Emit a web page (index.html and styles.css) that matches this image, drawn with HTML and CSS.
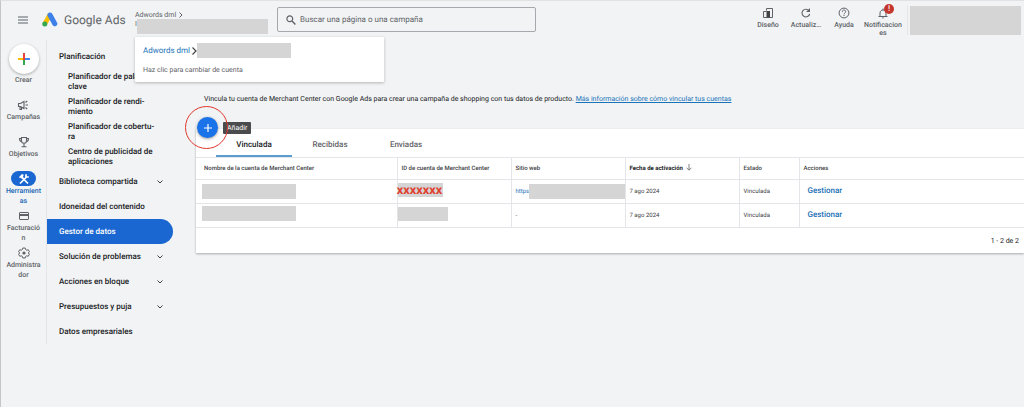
FILE: index.html
```html
<!DOCTYPE html>
<html lang="es">
<head>
    <meta charset="UTF-8">
    <title>Gestor de datos - Google Ads</title>
    <link rel="stylesheet" href="styles.css">
</head>
<body>

<header class="topbar">
    <button class="menu-button" aria-label="Menú">
        <svg width="10" height="8" viewBox="0 0 10 8"><path d="M0 1h10M0 4h10M0 7h10" stroke="#5f6368"/></svg>
    </button>
    <a class="logo" href="#">
        <svg width="16" height="15" viewBox="0 0 16 15">
            <path d="M7.500 3.500L3 11.500" stroke="#fbbc04" stroke-width="4.600" stroke-linecap="round"/>
            <path d="M8 3l4.800 8.700" stroke="#3c80e8" stroke-width="5" stroke-linecap="round"/>
            <circle cx="2.800" cy="12" r="2.500" fill="#34a853"/>
        </svg>
        <span>Google Ads</span>
    </a>
    <div class="account">
        <div class="account-path">Adwords dml
            <svg width="4" height="6" viewBox="0 0 4 6"><path d="M.5.5L3 3 .5 5.5" fill="none" stroke="#5f6368"/></svg>
        </div>
        <div class="account-name">I<span class="masked"></span></div>
        <div class="account-popup">
            <div class="popup-path">
                <a href="#">Adwords dml</a>
                <svg width="5" height="8" viewBox="0 0 5 8"><path d="M.5.5L4 4 .5 7.5" fill="none" stroke="#444" stroke-width="1.2"/></svg>
                <span class="masked"></span>
            </div>
            <div class="popup-hint">Haz clic para cambiar de cuenta</div>
        </div>
    </div>
    <label class="search">
        <svg width="10" height="10" viewBox="0 0 10 10"><circle cx="3.8" cy="3.8" r="2.9" fill="none" stroke="#5f6368" stroke-width="1.2"/><path d="M6 6l3.4 3.4" stroke="#5f6368" stroke-width="1.4"/></svg>
        <input type="text" placeholder="Buscar una página o una campaña" aria-label="Buscar una página o una campaña">
    </label>
    <div class="tools">
        <button class="tool">
            <svg width="12" height="12" viewBox="0 0 12 12"><path d="M4.500 3.500v-2h6v9h-9v-6h3" fill="none" stroke="#5f6368"/><path d="M4.500 4h3.500v6.500H4.500z" fill="#444"/></svg>
            Diseño
        </button>
        <button class="tool">
            <svg width="12" height="12" viewBox="0 0 12 12"><path d="M9 3.700A3.900 3.900 0 1 0 9.700 7" fill="none" stroke="#5f6368" stroke-width="1.100"/><path d="M10 1v4H6z" fill="#5f6368"/></svg>
            Actualiz…
        </button>
        <button class="tool">
            <svg width="12" height="12" viewBox="0 0 12 12"><circle cx="6" cy="6" r="4.900" fill="none" stroke="#5f6368"/><path d="M4.300 4.800C4.300 2.500 7.700 2.500 7.700 4.600 7.700 5.900 6 5.900 6 7.300M6 8v1" fill="none" stroke="#5f6368"/></svg>
            Ayuda
        </button>
        <button class="tool tool-wide">
            <svg width="12" height="12" viewBox="0 0 12 12"><path d="M1.500 9.500h9M3 9.500V6c0-4 6-4 6 0v3.500M6 3V1.500" fill="none" stroke="#5f6368"/><path d="M4.800 10.500h2.400L6 11.800z" fill="#5f6368"/></svg>
            Notificaciones
            <span class="badge">!</span>
        </button>
    </div>
    <div class="profile"><span class="masked"></span></div>
</header>

<div class="page">
    <nav class="rail" aria-label="Secciones">
        <button class="create">
            <span class="create-circle">
                <svg width="14" height="14" viewBox="0 0 14 14"><path d="M1 7h5" stroke="#fbbc04" stroke-width="2"/><path d="M8 7h5" stroke="#4285f4" stroke-width="2"/><path d="M7 7v6" stroke="#34a853" stroke-width="2"/><path d="M7 1v7" stroke="#ea4335" stroke-width="2"/></svg>
            </span>
            Crear
        </button>
        <a class="rail-item" href="#">
            <span class="rail-icon"><svg width="12" height="12" viewBox="0 0 12 12"><path d="M1.500 4.500h2L7 2.500v7l-3.500-2h-2zM3 7.500v3h1.500v-3M8.500 6h2.500M8.500 3.500L10.200 2M8.500 8.500l1.700 1.500" fill="none" stroke="#5f6368" stroke-width="1.100"/></svg></span>
            Campañas
        </a>
        <a class="rail-item" href="#">
            <span class="rail-icon"><svg width="12" height="12" viewBox="0 0 12 12"><path d="M3.500 1.500h5V5c0 3-5 3-5 0zM3.500 2.500h-2c0 2 .5 3 2.200 3M8.500 2.500h2c0 2-.5 3-2.200 3M6 7.500v3M3.500 10.800h5" fill="none" stroke="#5f6368" stroke-width="1.100"/></svg></span>
            Objetivos
        </a>
        <a class="rail-item active" href="#">
            <span class="rail-icon"><svg width="12" height="12" viewBox="0 0 12 12"><path d="M10 10.500L3.500 4M2 10.500L8.500 4" stroke="#fff" stroke-width="1.700"/><path d="M1 4l3-3 2 1-1 1 .5 1.500L4 6 3 4.500 2 5.300z" fill="#fff"/><path d="M8 1.200L8 3.800l2.800.2" fill="none" stroke="#fff" stroke-width="1.700"/></svg></span>
            Herramient<br>as
        </a>
        <a class="rail-item" href="#">
            <span class="rail-icon"><svg width="12" height="12" viewBox="0 0 12 12"><rect x="1.500" y="2.500" width="9" height="7" rx=".5" fill="none" stroke="#5f6368"/><path d="M1 5h10" stroke="#5f6368" stroke-width="2"/></svg></span>
            Facturació<br>n
        </a>
        <a class="rail-item" href="#">
            <span class="rail-icon"><svg width="12" height="12" viewBox="0 0 12 12"><path d="M4.800 1h2.400l.4 1.500 1.200.7 1.400-.5 1.200 2L10.300 6l1.100 1.300-1.200 2-1.400-.5-1.200.7-.4 1.500H4.800l-.4-1.500-1.200-.7-1.400.5-1.200-2L1.700 6 .6 4.700l1.200-2 1.400.5 1.200-.7z" fill="none" stroke="#5f6368"/><circle cx="6" cy="6" r="1.600" fill="#5f6368"/></svg></span>
            Administra<br>dor
        </a>
    </nav>

    <nav class="sidenav" aria-label="Herramientas">
        <a class="nav-item" href="#">Planificación</a>
        <a class="nav-item sub" href="#">Planificador de palabras clave</a>
        <a class="nav-item sub" href="#">Planificador de rendi-<br>miento</a>
        <a class="nav-item sub" href="#">Planificador de cobertu-<br>ra</a>
        <a class="nav-item sub" href="#">Centro de publicidad de aplicaciones</a>
        <a class="nav-item" href="#">Biblioteca compartida <svg width="6" height="4" viewBox="0 0 6 4"><path d="M.5.5L3 3 5.500.5" fill="none" stroke="#3c4043"/></svg></a>
        <a class="nav-item" href="#">Idoneidad del contenido</a>
        <a class="nav-item selected" href="#">Gestor de datos</a>
        <a class="nav-item" href="#">Solución de problemas <svg width="6" height="4" viewBox="0 0 6 4"><path d="M.5.5L3 3 5.500.5" fill="none" stroke="#3c4043"/></svg></a>
        <a class="nav-item" href="#">Acciones en bloque <svg width="6" height="4" viewBox="0 0 6 4"><path d="M.5.5L3 3 5.500.5" fill="none" stroke="#3c4043"/></svg></a>
        <a class="nav-item" href="#">Presupuestos y puja <svg width="6" height="4" viewBox="0 0 6 4"><path d="M.5.5L3 3 5.500.5" fill="none" stroke="#3c4043"/></svg></a>
        <a class="nav-item" href="#">Datos empresariales</a>
    </nav>

    <main class="content">
        <p class="intro">Vincula tu cuenta de Merchant Center con Google Ads para crear una campaña de shopping con tus datos de producto. <a href="#">Más información sobre cómo vincular tus cuentas</a></p>

        <section class="card">
            <div class="add">
                <button class="add-button" aria-label="Añadir">
                    <svg width="10" height="10" viewBox="0 0 10 10"><path d="M5 1v8M1 5h8" stroke="#fff" stroke-width="1.200"/></svg>
                </button>
                <span class="tooltip">Añadir</span>
                <span class="add-ring"></span>
            </div>
            <div class="tabs" role="tablist">
                <button class="tab current" role="tab">Vinculada</button>
                <button class="tab" role="tab">Recibidas</button>
                <button class="tab" role="tab">Enviadas</button>
            </div>
            <table class="accounts">
                <thead>
                    <tr>
                        <th class="col-name">Nombre de la cuenta de Merchant Center</th>
                        <th class="col-id">ID de cuenta de Merchant Center</th>
                        <th class="col-site">Sitio web</th>
                        <th class="col-date sorted">Fecha de activación <svg width="6" height="7" viewBox="0 0 6 7"><path d="M3 0v6M.5 3.700L3 6.200l2.500-2.500" fill="none" stroke="#5f6368" stroke-width=".8"/></svg></th>
                        <th class="col-status">Estado</th>
                        <th>Acciones</th>
                    </tr>
                </thead>
                <tbody>
                    <tr>
                        <td><span class="masked name-mask"></span></td>
                        <td><span class="masked id-mask">XXXXXXX</span></td>
                        <td><div class="site"><a href="#">https</a><span class="masked"></span></div></td>
                        <td>7 ago 2024</td>
                        <td>Vinculada</td>
                        <td><button class="manage">Gestionar</button></td>
                    </tr>
                    <tr>
                        <td><span class="masked name-mask"></span></td>
                        <td><span class="masked id-mask id-blank"></span></td>
                        <td>-</td>
                        <td>7 ago 2024</td>
                        <td>Vinculada</td>
                        <td><button class="manage">Gestionar</button></td>
                    </tr>
                </tbody>
            </table>
            <div class="pager">1 - 2 de 2</div>
        </section>
    </main>
</div>

</body>
</html>
```
FILE: styles.css
```css
* {
	box-sizing: border-box;
}
body {
	margin: 0;
	min-height: 100vh;
	background: #f1f3f4;
	border-top: 1px solid #e0e2e4;
	border-left: 1px solid #c4c6c8;
	color: #3c4043;
	font-family: Roboto, Arial, sans-serif;
	font-size: 7px;
	line-height: 10px;
	text-rendering: geometricPrecision;
}
button {
	padding: 0;
	border: 0;
	background: none;
	color: inherit;
	font: inherit;
	text-rendering: inherit;
	cursor: pointer;
}
a {
	color: #1a73b8;
	text-decoration: none;
}
svg {
	display: block;
	flex: none;
}
.masked {
	display: block;
	background: #d5d5d5;
}

/* Top bar */
.topbar {
	display: flex;
	align-items: flex-start;
	height: 39px;
}
.menu-button {
	margin: 15px 14px 0 17px;
}
.logo {
	display: flex;
	align-items: center;
	gap: 6px;
	width: 93px;
	height: 37px;
	color: #5f6368;
	font-size: 12px;
	white-space: nowrap;
}
.account {
	position: relative;
	width: 133px;
	margin-right: 9px;
	padding-top: 9px;
	color: #5f6368;
}
.account-path {
	display: flex;
	align-items: center;
	gap: 3px;
	height: 9px;
}
.account-name {
	display: flex;
}
.account-name .masked {
	flex: 1;
	height: 15px;
}
/* Account switcher, opens over the page */
.account-popup {
	position: absolute;
	z-index: 2;
	top: 36px;
	left: 0;
	width: 249px;
	padding: 6px 8px;
	background: #fff;
	border-radius: 1px;
	box-shadow: 0 1px 3px rgba(60, 64, 67, 0.35);
}
.popup-path {
	display: flex;
	align-items: center;
	gap: 2px;
	font-size: 8px;
}
.popup-path .masked {
	width: 94px;
	height: 15px;
	margin-left: -2px;
}
.popup-hint {
	margin-top: 7px;
	padding-bottom: 1px;
}
.search {
	display: flex;
	align-items: center;
	gap: 4px;
	flex: 0 1 259px;
	height: 25px;
	margin-top: 6px;
	padding: 0 8px;
	border: 1px solid #a5a9ae;
	border-radius: 2px;
}
.search input {
	flex: 1;
	min-width: 0;
	padding: 0;
	border: 0;
	outline: 0;
	background: none;
	font: inherit;
	font-size: 8px;
	text-rendering: inherit;
}
.search input::placeholder {
	color: #5f6368;
	opacity: 1;
}
.tools {
	display: flex;
	gap: 2px;
	margin-left: auto;
	padding-top: 6px;
}
.tool {
	position: relative;
	display: flex;
	flex-direction: column;
	align-items: center;
	gap: 2px;
	width: 36px;
	color: #5f6368;
	font-weight: 500;
	line-height: 8px;
}
.tool-wide {
	width: 38px;
	word-break: break-all;
}
.badge {
	position: absolute;
	top: -3px;
	right: 8px;
	width: 10px;
	border-radius: 5px;
	background: #c5352b;
	color: #fff;
	font-size: 8px;
	line-height: 10px;
}
.profile {
	margin: 5px 3px 0 5px;
	padding-left: 2px;
	border-left: 1px solid #e4e6e8;
}
.profile .masked {
	width: 111px;
	height: 29px;
}

/* Left rail and side navigation */
.page {
	display: flex;
}
.rail {
	display: flex;
	flex-direction: column;
	align-items: center;
	width: 45px;
	padding-top: 4px;
	color: #5f6368;
	font-weight: 500;
}
.create {
	margin-bottom: 12px;
	font-weight: 500;
}
.create-circle {
	display: grid;
	place-items: center;
	width: 30px;
	height: 30px;
	margin-bottom: 1px;
	border-radius: 50%;
	background: #fff;
	box-shadow: 0 1px 3px rgba(60, 64, 67, 0.4);
}
.rail-item {
	margin-bottom: 12px;
	color: #5f6368;
	text-align: center;
}
.rail-icon {
	display: grid;
	place-items: center;
	width: 25px;
	height: 15px;
	margin: 0 auto;
	border-radius: 8px;
}
.rail-item.active {
	color: #1967b3;
}
.active .rail-icon {
	background: #1a67d2;
}
.rail-item.active,
.rail-item.active ~ .rail-item {
	margin-bottom: 2px;
}
.sidenav {
	width: 127px;
	padding-top: 4px;
	border-left: 1px solid #e3e5e8;
}
.nav-item {
	display: flex;
	align-items: center;
	justify-content: space-between;
	height: 25px;
	padding: 0 10px 0 12px;
	color: #202124;
	font-size: 8px;
	font-weight: 500;
}
.nav-item.sub {
	display: block;
	padding: 3px 14px 0 21px;
}
.nav-item.selected {
	border-radius: 0 13px 13px 0;
	background: #1a67d2;
	color: #fff;
}

/* Merchant Center accounts */
.content {
	flex: 1;
	min-width: 0;
	padding: 54px 0 0 23px;
}
.intro {
	margin: 0 8px 25px;
	color: #202124;
}
.intro a {
	text-decoration: underline;
}
.card {
	position: relative;
	background: #fff;
	box-shadow: 0 1px 2px rgba(60, 64, 67, 0.4);
}
/* The add button floats over the top edge of the card */
.add {
	position: absolute;
	top: -12px;
	left: 1px;
	display: flex;
	align-items: center;
	gap: 5px;
}
.add-button {
	display: grid;
	place-items: center;
	width: 21px;
	height: 21px;
	border-radius: 50%;
	background: #1a73e8;
	box-shadow: 0 1px 3px rgba(60, 64, 67, 0.5);
}
.add-ring {
	position: absolute;
	top: -11px;
	left: -12px;
	width: 43px;
	height: 43px;
	border: 1px solid #e0382c;
	border-radius: 50%;
}
.tooltip {
	padding: 1px 4px;
	border-radius: 1px;
	background: #4a4b4d;
	color: #fff;
}
.tabs {
	display: flex;
	height: 28px;
	padding-left: 20px;
}
.tab {
	width: 76px;
	padding-top: 6px;
	border-bottom: 2px solid transparent;
	color: #5f6368;
	font-size: 8px;
	font-weight: 500;
}
.tab.current {
	border-color: #5b9dcf;
	color: #202124;
}
.accounts {
	width: 100%;
	border-collapse: collapse;
	table-layout: fixed;
	border-top: 1px solid #e3e5e8;
	font-size: 6px;
}
.accounts th,
.accounts td {
	height: 24px;
	padding: 0 4px;
	border-bottom: 1px solid #e3e5e8;
	border-left: 1px solid #e3e5e8;
	text-align: left;
	white-space: nowrap;
}
.accounts th {
	height: 22px;
	font-weight: 500;
}
.accounts th:first-child,
.accounts td:first-child {
	padding-left: 8px;
	border-left: 0;
}
.accounts .sorted {
	color: #202124;
	font-weight: 700;
}
.sorted svg {
	display: inline-block;
	margin-left: 2px;
	vertical-align: middle;
}
.col-name {
	width: 201px;
}
.col-id,
.col-site,
.col-date {
	width: 114px;
}
.col-status {
	width: 60px;
}
.name-mask {
	width: 94px;
	height: 15px;
	margin-left: -2px;
}
.accounts tr + tr .masked {
	margin-bottom: 4px;
}
.id-mask {
	width: 46px;
	height: 14px;
	margin: 0 0 4px -5px;
	color: #e0402f;
	font-family: "Open Sans", Arial, sans-serif;
	font-size: 9px;
	font-weight: 800;
	line-height: 15px;
	text-align: center;
}
.id-blank {
	width: 51px;
}
.site {
	display: flex;
	align-items: center;
	margin-right: -4px;
}
.site .masked {
	flex: 1;
	height: 15px;
}
.manage {
	margin-left: 4px;
	color: #1a6fb5;
	font-size: 8px;
	font-weight: 500;
}
.pager {
	padding: 8px 5px 7px;
	color: #202124;
	text-align: right;
}
```
